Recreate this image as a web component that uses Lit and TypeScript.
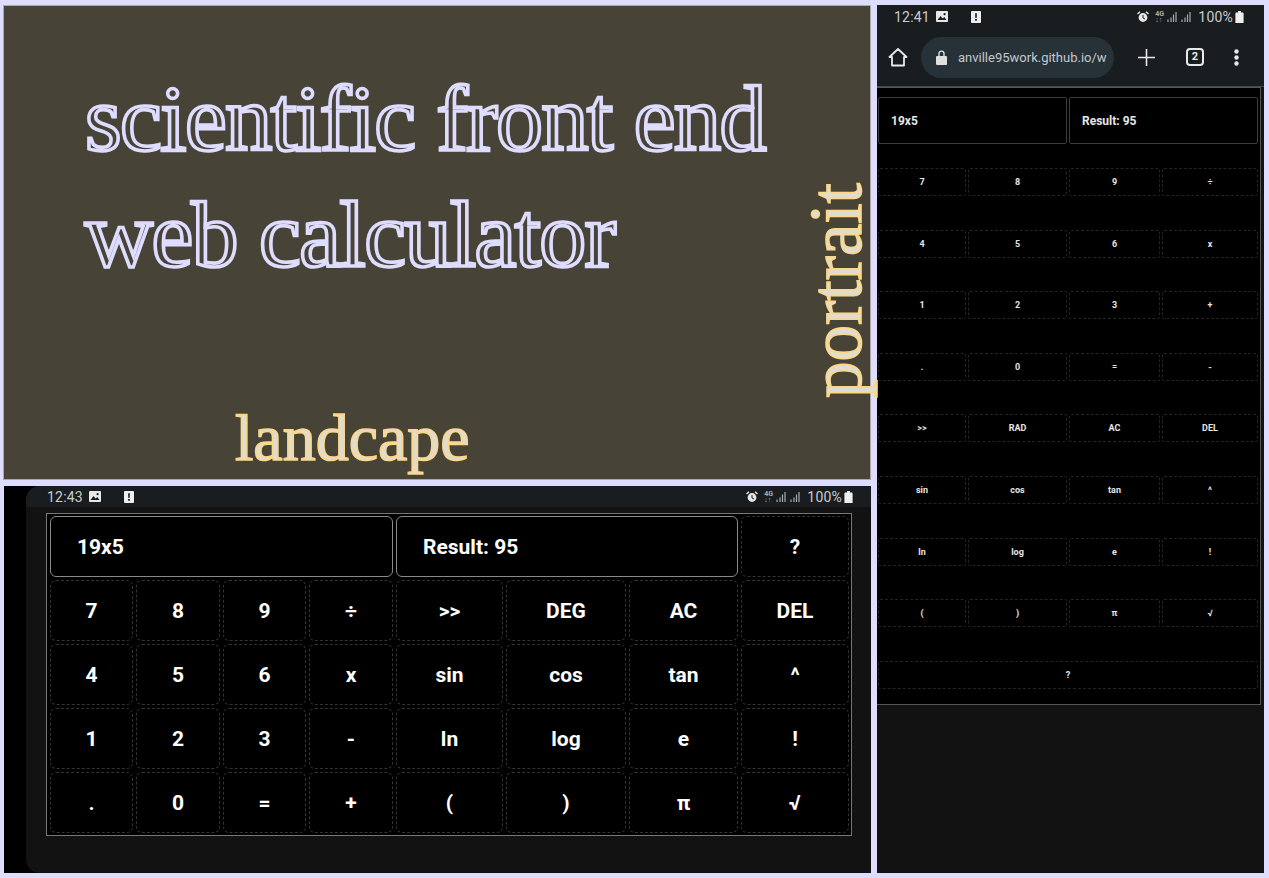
import { css, html, LitElement, svg } from "lit";
import { customElement, property } from "lit/decorators.js";

const wideKeys = [
    ["7", "8", "9", "÷", ">>", "DEG", "AC", "DEL"],
    ["4", "5", "6", "x", "sin", "cos", "tan", "^"],
    ["1", "2", "3", "-", "ln", "log", "e", "!"],
    [".", "0", "=", "+", "(", ")", "π", "√"],
];

const tallKeys = [
    ["7", "8", "9", "÷"],
    ["4", "5", "6", "x"],
    ["1", "2", "3", "+"],
    [".", "0", "=", "-"],
    [">>", "RAD", "AC", "DEL"],
    ["sin", "cos", "tan", "^"],
    ["ln", "log", "e", "!"],
    ["(", ")", "π", "√"],
];

const imageIcon = svg`<path fill="#e8e8e8" d="M1 0h10a1 1 0 0 1 1 1v9a1 1 0 0 1-1 1H1a1 1 0 0 1-1-1V1a1 1 0 0 1 1-1z"/><path fill="#1a1d20" d="M1.5 9l3-4 2.2 2.4 1.6-1.4 2.2 3z"/><circle cx="8.6" cy="3.2" r="1.1" fill="#1a1d20"/>`;
const alertIcon = svg`<rect x="0" y="0" width="10" height="12" rx="1" fill="#eee"/><path fill="#1a1d20" d="M4.1 2.2h1.8l-.2 4.8H4.3zM4.1 8h1.8v1.8H4.1z"/>`;

@customElement("status-bar")
export class StatusBar extends LitElement {
    @property() time = "12:41";

    static styles = css`
    :host {
      display: flex;
      align-items: center;
      height: 21px;
      font: 14px Roboto, sans-serif;
      letter-spacing: 0.2px;
      color: #c9cccf;
      background: #1a1d20;
    }
    .left,
    .right {
      display: flex;
      align-items: center;
    }
    .image {
      margin-left: 6px;
    }
    .alert {
      margin-left: 23px;
    }
    .right {
      margin-left: auto;
    }
    .net {
      width: 9px;
      margin: 0 3px 0 6px;
      font-size: 7px;
      line-height: 6px;
      font-weight: 700;
      letter-spacing: 0;
      color: #a8abae;
    }
    .bars {
      margin-right: 4px;
    }
    .pct {
      margin-left: 3px;
    }
    .batt {
      margin-left: 2px;
    }
  `;

    render() {
        return html`
            <div class="left">
                <span>${this.time}</span>
                <svg class="image" width="12" height="11" viewBox="0 0 12 11">${imageIcon}</svg>
                <svg class="alert" width="10" height="12" viewBox="0 0 10 12">${alertIcon}</svg>
            </div>
            <div class="right">
                <svg width="12" height="12" viewBox="0 0 12 12">
                    <circle cx="6" cy="6.5" r="4.4" fill="#e8e8e8"/>
                    <path d="M6 4v3l2 1" stroke="#1a1d20" fill="none"/>
                    <path d="M0.5 3L3 .7M11.5 3L9 .7" stroke="#e8e8e8" stroke-width="1.4"/>
                </svg>
                <span class="net">4G<br>↓↑</span>
                <svg class="bars" width="10" height="11" viewBox="0 0 10 11"><path stroke="#a8abae" stroke-width="1.2" d="M1 11V8.5M4 11V6.5M6.5 11V3.5M9 11V1"/></svg>
                <svg class="bars" width="10" height="11" viewBox="0 0 10 11"><path stroke="#a8abae" stroke-width="1.2" d="M1 11V8.5M4 11V6.5M6.5 11V3.5M9 11V1"/></svg>
                <span class="pct">100%</span>
                <svg class="batt" width="9" height="12" viewBox="0 0 9 12"><path fill="#eee" d="M3 0h3v1.4h1.6a1 1 0 0 1 1 1V12H.4V2.4a1 1 0 0 1 1-1H3z"/></svg>
            </div>
        `;
    }
}

@customElement("app-root")
export class AppRoot extends LitElement {
    static styles = css`
    :host {
      display: grid;
      grid-template-columns: 868px 387px;
      grid-template-rows: 475px 387px;
      column-gap: 6px;
      row-gap: 6px;
      width: 1269px;
      height: 878px;
      box-sizing: border-box;
      padding: 5px 0 5px 3px;
      background: #dedcff;
      overflow: hidden;
      font-family: Roboto, sans-serif;
      position: relative;
    }
    .cover {
      background: #474337;
      border: 1px solid #a9a8a6;
      box-sizing: border-box;
      padding: 54px 0 0 81px;
      display: flex;
      flex-direction: column;
      align-items: flex-start;
      font-family: "Liberation Serif", serif;
    }
    .title {
      margin: 0;
      font-size: 94px;
      font-weight: 400;
      line-height: 116px;
      letter-spacing: -1.5px;
      white-space: nowrap;
      color: #474337;
      -webkit-text-stroke: 3.6px #dedcff;
    }
    .tag {
      font-size: 66px;
      line-height: 68px;
      color: #dfdcd2;
      -webkit-text-stroke: 1.6px #fdd783;
    }
    .tag.wide {
      margin: auto 0 0 150px;
      padding-bottom: 7px;
    }
    .tag.tall {
      position: absolute;
      left: 803px;
      top: 398px;
      font-size: 73px;
      transform-origin: 0 0;
      transform: rotate(-90deg);
      font-family: "Liberation Serif", serif;
    }

    .wide-phone {
      margin-left: 1px;
      display: flex;
      background: #000;
    }
    .wide-body {
      margin-left: 22px;
      flex: 1;
      background: #121212;
      border-radius: 14px 0 0 14px;
      overflow: hidden;
    }
    .wide-body status-bar {
      padding: 0 18px 0 21px;
    }
    .wide-calc {
      display: grid;
      grid-template-columns: 83px 84px 83px 84px 107px 120px 109px 108px;
      grid-auto-rows: 61px;
      gap: 3px;
      width: 799px;
      margin: 6px 0 0 20px;
      padding: 2px 2px 2px 3px;
      background: #000;
      border: 1px solid #777;
      font-size: 21px;
      font-weight: 700;
      color: #fff;
    }

    .tall-phone {
      grid-column: 2;
      grid-row: 1 / 3;
      display: flex;
      flex-direction: column;
      background: #121212;
    }
    .tall-phone status-bar {
      padding: 0 20px 0 17px;
      height: 23px;
    }
    .toolbar {
      display: flex;
      align-items: center;
      height: 58px;
      padding: 0 0 0 11px;
      background: #1a1d20;
      border-bottom: 1px solid #46494c;
    }
    .url {
      display: flex;
      align-items: center;
      gap: 11px;
      width: 193px;
      height: 41px;
      box-sizing: border-box;
      margin-left: 13px;
      padding-left: 15px;
      border-radius: 21px;
      background: #263238;
      font-size: 13px;
      color: #c4c8cb;
      white-space: nowrap;
      overflow: hidden;
    }
    .plus {
      margin-left: 24px;
    }
    .tabs {
      margin-left: 31px;
      width: 18px;
      height: 18px;
      box-sizing: border-box;
      border: 2px solid #e8e8e8;
      border-radius: 4px;
      font-size: 11px;
      font-weight: 700;
      line-height: 14px;
      text-align: center;
      color: #e8e8e8;
    }
    .dots {
      margin-left: 30px;
    }
    .tall-calc {
      width: 384px;
      height: 618px;
      box-sizing: border-box;
      padding: 9px 0 0 1px;
      background: #000;
      border: 1px solid #555;
      border-width: 1px 1px 1px 0;
      font-size: 9px;
      font-weight: 700;
      color: #e6e6e6;
    }
    .tall-top {
      display: grid;
      grid-template-columns: 189px 189px;
      gap: 2px;
      margin-bottom: 24px;
      font-size: 12px;
    }
    .tall-top .screen {
      height: 47px;
      padding-left: 12px;
      border-color: #3c3c3c;
      border-radius: 2px;
    }
    .tall-keys {
      display: grid;
      grid-template-columns: 88px 99px 91px 96px;
      grid-auto-rows: 28px;
      gap: 33.6px 2px;
    }
    .tall-keys .key {
      border-color: #242424;
      border-radius: 2px;
    }

    .key,
    .screen {
      display: flex;
      align-items: center;
      box-sizing: border-box;
      background: #000;
    }
    .key {
      justify-content: center;
      border: 1px dashed #333;
      border-radius: 6px;
    }
    .screen {
      padding-left: 26px;
      border: 1px solid #8a8a8a;
      border-radius: 6px;
    }
    .half-a {
      grid-column: 1 / 5;
    }
    .half-b {
      grid-column: 5 / 8;
    }
    .full {
      grid-column: 1 / -1;
    }
  `;

    render() {
        return html`
            <section class="cover">
                <h1 class="title">scientific front end<br>web calculator</h1>
                <div class="tag wide">landcape</div>
            </section>

            <section class="tall-phone">
                <status-bar time="12:41"></status-bar>
                <div class="toolbar">
                    <svg width="20" height="20" viewBox="0 0 20 20" fill="none" stroke="#e8e8e8" stroke-width="1.8" stroke-linejoin="round"><path d="M1.5 10L10 2l8.5 8H16v8.5H4V10z"/></svg>
                    <div class="url">
                        <svg width="11" height="15" viewBox="0 0 11 15"><path fill="#e0e0e0" d="M1 6h9a1 1 0 0 1 1 1v7a1 1 0 0 1-1 1H1a1 1 0 0 1-1-1V7a1 1 0 0 1 1-1z"/><path fill="none" stroke="#e0e0e0" stroke-width="1.4" d="M3 6V3.6a2.5 2.5 0 0 1 5 0V6"/></svg>
                        <span>anville95work.github.io/w</span>
                    </div>
                    <svg class="plus" width="17" height="17" viewBox="0 0 17 17"><path stroke="#e8e8e8" stroke-width="1.6" d="M8.5 0v17M0 8.5h17"/></svg>
                    <div class="tabs">2</div>
                    <svg class="dots" width="5" height="17" viewBox="0 0 5 17"><g fill="#e8e8e8"><circle cx="2.5" cy="2.5" r="2.2"/><circle cx="2.5" cy="8.5" r="2.2"/><circle cx="2.5" cy="14.5" r="2.2"/></g></svg>
                </div>
                <div class="tall-calc">
                    <div class="tall-top">
                        <div class="screen">19x5</div>
                        <div class="screen">Result: 95</div>
                    </div>
                    <div class="tall-keys">
                        ${tallKeys.flat().map((k) => html`<div class="key">${k}</div>`)}
                        <div class="key full">?</div>
                    </div>
                </div>
            </section>

            <section class="wide-phone">
                <div class="wide-body">
                    <status-bar time="12:43"></status-bar>
                    <div class="wide-calc">
                        <div class="screen half-a">19x5</div>
                        <div class="screen half-b">Result: 95</div>
                        <div class="key">?</div>
                        ${wideKeys.flat().map((k) => html`<div class="key">${k}</div>`)}
                    </div>
                </div>
            </section>

            <div class="tag tall">portrait</div>
        `;
    }
}
